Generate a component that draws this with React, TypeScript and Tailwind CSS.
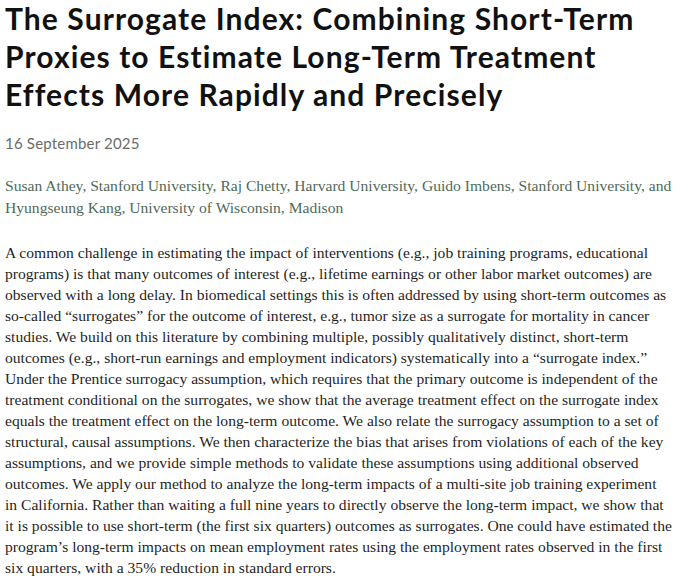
const titleLines = [
  "The Surrogate Index: Combining Short-Term",
  "Proxies to Estimate Long-Term Treatment",
  "Effects More Rapidly and Precisely",
]

const authorLines = [
  "Susan Athey, Stanford University, Raj Chetty, Harvard University, Guido Imbens, Stanford University, and",
  "Hyungseung Kang, University of Wisconsin, Madison",
]

const abstractLines = [
  "A common challenge in estimating the impact of interventions (e.g., job training programs, educational",
  "programs) is that many outcomes of interest (e.g., lifetime earnings or other labor market outcomes) are",
  "observed with a long delay. In biomedical settings this is often addressed by using short-term outcomes as",
  "so-called \u201csurrogates\u201d for the outcome of interest, e.g., tumor size as a surrogate for mortality in cancer",
  "studies. We build on this literature by combining multiple, possibly qualitatively distinct, short-term",
  "outcomes (e.g., short-run earnings and employment indicators) systematically into a \u201csurrogate index.\u201d",
  "Under the Prentice surrogacy assumption, which requires that the primary outcome is independent of the",
  "treatment conditional on the surrogates, we show that the average treatment effect on the surrogate index",
  "equals the treatment effect on the long-term outcome. We also relate the surrogacy assumption to a set of",
  "structural, causal assumptions. We then characterize the bias that arises from violations of each of the key",
  "assumptions, and we provide simple methods to validate these assumptions using additional observed",
  "outcomes. We apply our method to analyze the long-term impacts of a multi-site job training experiment",
  "in California. Rather than waiting a full nine years to directly observe the long-term impact, we show that",
  "it is possible to use short-term (the first six quarters) outcomes as surrogates. One could have estimated the",
  "program\u2019s long-term impacts on mean employment rates using the employment rates observed in the first",
  "six quarters, with a 35% reduction in standard errors.",
]

export default function App() {
  return (
    <div className="min-h-[584px] bg-white px-[5px] overflow-hidden">
      {/* Title */}
      <h1 className="flex flex-col gap-[2px] font-['Lato',sans-serif] font-bold text-[30px] leading-9 text-[#111] tracking-[1.1px]">
        {titleLines.map((l) => (
          <span key={l} className="whitespace-nowrap">{l}</span>
        ))}
      </h1>

      {/* Date */}
      <p className="mt-[21px] font-['Lato',sans-serif] text-[15px] leading-5 text-[#6b6b6b] tracking-[0.2px]">
        16 September 2025
      </p>

      {/* Authors */}
      <div className="mt-[22px] font-['Liberation_Serif',serif] text-[15.6px] leading-[22px] text-[#4f6a5a]">
        {authorLines.map((l) => (
          <span key={l} className="block whitespace-nowrap">{l}</span>
        ))}
      </div>

      {/* Abstract */}
      <div className="mt-[23px] font-['Liberation_Serif',serif] text-[15.6px] leading-[21px] text-[#1f1f1f]">
        {abstractLines.map((l) => (
          <span key={l} className="block whitespace-nowrap">{l}</span>
        ))}
      </div>
    </div>
  )
}
